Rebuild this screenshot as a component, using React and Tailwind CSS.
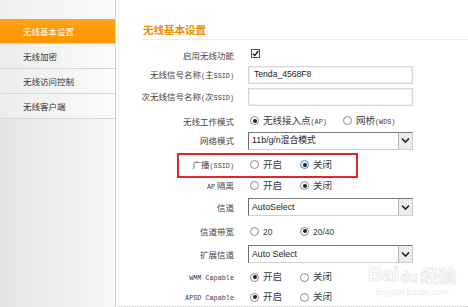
import React from "react";

const CJK = "font-['Noto_Sans_CJK_SC',sans-serif]";

function M({ children }) {
  return <span className="font-['Liberation_Mono',monospace] text-[6.8px]">{children}</span>;
}

function Radio({ checked, focus, label, w }) {
  return (
    <span className={"flex items-center " + (w || "")}>
      <span
        className={
          focus
            ? "ml-[2px] w-[9px] h-[9px] rounded-full border border-[#4a90d9] bg-[#e2effb] flex items-center justify-center"
            : "ml-[2px] w-[9px] h-[9px] rounded-full border border-[#8a8a8a] bg-white flex items-center justify-center"
        }
      >
        {checked ? <span className="w-[4px] h-[4px] rounded-full bg-[#222]" /> : null}
      </span>
      <span className="ml-[4px] text-[9.5px] leading-none text-[#3a3a3a]">{label}</span>
    </span>
  );
}

function Chevron() {
  return (
    <svg width="9" height="7" viewBox="0 0 9 7">
      <polyline points="1,1.5 4.5,5 8,1.5" fill="none" stroke="#222" strokeWidth="1.6" />
    </svg>
  );
}

function Select({ text, font }) {
  return (
    <div className="w-[165px] h-[18px] flex border-t border-l border-t-[#7a7a7a] border-l-[#6a6a6a] border-r border-b border-r-[#c8c8c8] border-b-[#d0d0d0] bg-white">
      <div className={"flex-1 flex items-center pl-[3px] text-[8.8px] text-[#222] " + font}>{text}</div>
      <div className="w-[14px] h-full flex items-center justify-center bg-[#ececec] border-l border-[#b5b5b5]">
        <Chevron />
      </div>
    </div>
  );
}

function Input({ text }) {
  return (
    <div className="w-[165px] h-[18px] border border-[#d6d6d6] shadow-[inset_0_0_0_1px_#f0f0f0] bg-white flex items-center pl-[5px] text-[8.6px] text-[#222] font-['Liberation_Sans',sans-serif]">
      {text}
    </div>
  );
}

function Row({ label, mt, children, extra }) {
  return (
    <div className={"relative flex items-center h-[18px] " + mt}>
      {extra}
      <div className={"w-[115px] text-right text-[8.5px] leading-none text-[#444] whitespace-nowrap " + CJK}>{label}</div>
      <div className="ml-[14px] flex items-center">{children}</div>
    </div>
  );
}

export default function App() {
  const items = ["无线加密", "无线访问控制", "无线客户端"];
  return (
    <div className={"relative w-[468px] h-[307px] overflow-hidden bg-white flex " + CJK}>
      {/* sidebar */}
      <div className="w-[116px] h-full border-r border-[#d2d2d2] bg-gradient-to-r from-[#e4e4e4] to-[#f7f7f7] flex flex-col">
        <div className="h-[19px] bg-gradient-to-r from-[#f0f0f0] to-[#fafafa]" />
        <div className="h-[25px] flex items-center pl-[23px] text-[8.5px] text-white bg-gradient-to-b from-[#ffa41c] via-[#ff9900] to-[#f89800] border-b border-[#f8d27a]">
          无线基本设置
        </div>
        {items.map((t) => (
          <div
            key={t}
            className="h-[25px] flex items-center pl-[23px] text-[8.5px] text-[#333] border-b border-[#d6d6d6] bg-gradient-to-r from-[#ececec] to-[#fbfbfb]"
          >
            {t}
          </div>
        ))}
      </div>
      <div className="w-[3px] h-full border-r border-[#ebebeb]" />
      {/* content */}
      <div className="flex-1 h-[307px] border-b border-dotted border-[#bdbdbd] flex flex-col">
        <div className="ml-[24px] pt-[23px] pb-[2px] border-b border-[#ececec]">
          <div className="h-[14px] flex items-center text-[10.5px] font-bold text-[#f08c00]">无线基本设置</div>
        </div>

        <Row label="启用无线功能" mt="mt-[6px]">
          <span className="ml-[3px] mb-[3px] w-[9px] h-[9px] border border-[#555] bg-white flex items-center justify-center">
            <svg width="7" height="7" viewBox="0 0 7 7">
              <polyline points="0.8,3.6 2.7,5.6 6.3,1" fill="none" stroke="#111" strokeWidth="1.3" />
            </svg>
          </span>
        </Row>

        <Row label={<>无线信号名称<M>(</M>主<M>SSID)</M></>} mt="mt-[2px]">
          <Input text="Tenda_4568F8" />
        </Row>

        <Row label={<>次无线信号名称<M>(</M>次<M>SSID)</M></>} mt="mt-[4px]">
          <Input text="" />
        </Row>

        <Row label="无线工作模式" mt="mt-[6px]">
          <Radio checked label={<>无线接入点<M>(AP)</M></>} w="w-[93px]" />
          <Radio label={<>网桥<M>(WDS)</M></>} />
        </Row>

        <Row label="网络模式" mt="mt-[2px]">
          <Select text="11b/g/n混合模式" font="font-['Liberation_Sans','Noto_Sans_CJK_SC',sans-serif]" />
        </Row>

        <Row
          label={<>广播<M>(SSID)</M></>}
          mt="mt-[6px]"
          extra={<div className="absolute left-[58px] top-[-3px] w-[181px] h-[25px] border-2 border-[#e3262a]" />}
        >
          <Radio label="开启" w="w-[50px]" />
          <Radio checked focus label="关闭" />
        </Row>

        <Row label={<><M>AP</M> 隔离</>} mt="mt-[3px]">
          <Radio label="开启" w="w-[50px]" />
          <Radio checked label="关闭" />
        </Row>

        <Row label="信道" mt="mt-[4px]">
          <Select text="AutoSelect" font="font-['Liberation_Sans',sans-serif]" />
        </Row>

        <Row label="信道带宽" mt="mt-[6px]">
          <Radio label={<span className="font-['Liberation_Sans',sans-serif] text-[8.5px]">20</span>} w="w-[50px]" />
          <Radio checked label={<span className="font-['Liberation_Sans',sans-serif] text-[8.5px]">20/40</span>} />
        </Row>

        <Row label="扩展信道" mt="mt-[5px]">
          <Select text="Auto Select" font="font-['Liberation_Sans',sans-serif]" />
        </Row>

        <Row label={<M>WMM Capable</M>} mt="mt-[5px]">
          <Radio checked label="开启" w="w-[50px]" />
          <Radio label="关闭" />
        </Row>

        <Row label={<M>APSD Capable</M>} mt="mt-[2px]">
          <Radio checked label="开启" w="w-[50px]" />
          <Radio label="关闭" />
        </Row>
      </div>

      {/* watermark */}
      <div className="absolute left-[368px] top-[264px] flex flex-col items-center pointer-events-none">
        <div className="flex items-end leading-none">
          <span className="font-['Liberation_Sans',sans-serif] font-bold text-[20px] text-transparent [-webkit-text-stroke:0.7px_#e4e4e4]">Bai</span>
          <span className="font-['Liberation_Sans',sans-serif] font-bold text-[14px] text-transparent [-webkit-text-stroke:0.7px_#e4e4e4] ml-[1px]">du</span>
          <span className="font-bold text-[18px] text-transparent [-webkit-text-stroke:0.7px_#e4e4e4] ml-[3px]">经验</span>
        </div>
        <div className="font-['Liberation_Sans',sans-serif] text-[9px] text-[#ebebeb] mt-[2px]">jingyan.baidu.com</div>
      </div>
    </div>
  );
}
